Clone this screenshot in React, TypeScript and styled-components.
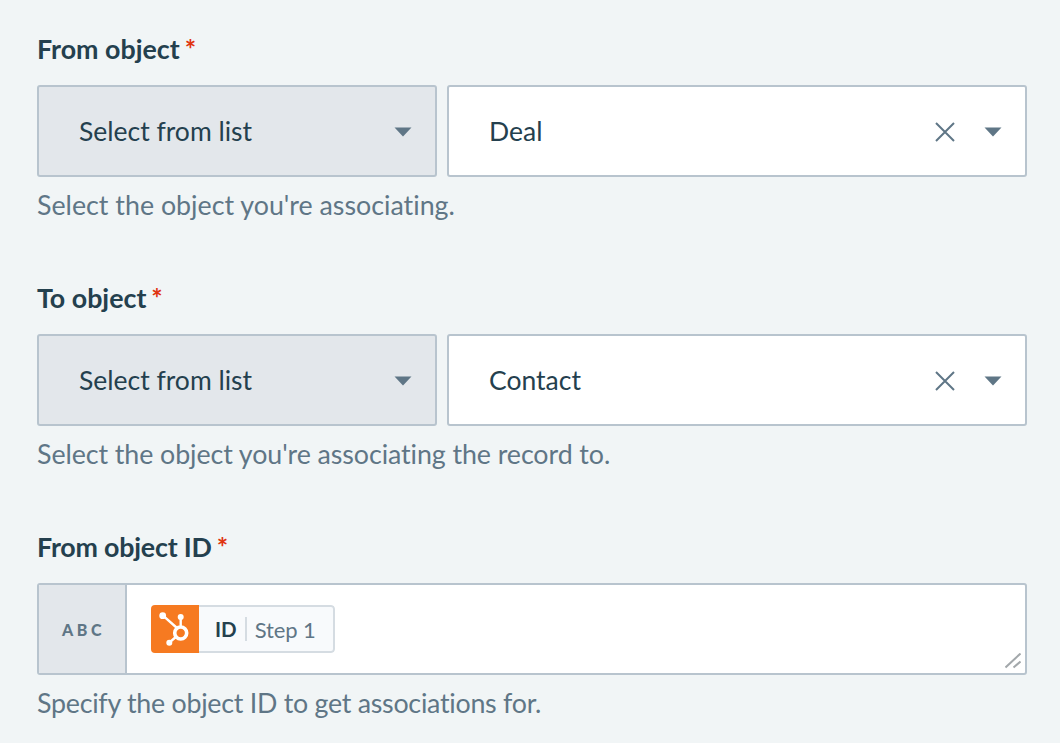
import React from 'react';
import styled, { createGlobalStyle } from 'styled-components';

const GlobalStyle = createGlobalStyle`
  html, body {
    margin: 0;
    padding: 0;
    background: #f1f5f6;
  }
  body {
    font-family: 'Lato', 'Noto Sans', sans-serif;
    font-variant-ligatures: none;
    color: #24404e;
  }
`;

const Caret = () => (
  <CaretSvg viewBox="0 0 18 10" width="18" height="10">
    <path d="M0.5 0.5h17L9 9.5z" fill="#5f7686" />
  </CaretSvg>
);

const Clear = () => (
  <ClearSvg viewBox="0 0 20 20" width="20" height="20">
    <path d="M1 1l18 18M19 1L1 19" stroke="#5f7686" strokeWidth="2" fill="none" />
  </ClearSvg>
);

const HubspotLogo = () => (
  <svg viewBox="0 0 48 48" width="48" height="48">
    <g fill="none" stroke="#fff">
      <circle cx="29.7" cy="28" r="6" strokeWidth="3.6" />
      <path d="M29.7 12v9M12 10.7l14 12.3M18.3 37.7l6.5-5.7" strokeWidth="2.4" />
    </g>
    <g fill="#fff">
      <circle cx="29.7" cy="12" r="3" />
      <circle cx="11.7" cy="10.7" r="3.4" />
      <circle cx="18.3" cy="37.7" r="3" />
    </g>
  </svg>
);

const SelectRow = ({ value }: { value: string }) => (
  <Row>
    <ModeSelect>
      <span>Select from list</span>
      <Caret />
    </ModeSelect>
    <ValueSelect>
      <span>{value}</span>
      <Actions>
        <Clear />
        <Caret />
      </Actions>
    </ValueSelect>
  </Row>
);

const App = () => (
  <Page>
    <GlobalStyle />
    <Field>
      <Label>
        From object<Star>*</Star>
      </Label>
      <SelectRow value="Deal" />
      <Hint>Select the object you're associating.</Hint>
    </Field>
    <Field>
      <Label>
        To object<Star>*</Star>
      </Label>
      <SelectRow value="Contact" />
      <Hint $tracking={-0.08}>Select the object you're associating the record to.</Hint>
    </Field>
    <Field>
      <Label $tracking={-0.2}>
        From object ID<Star>*</Star>
      </Label>
      <TextBox>
        <TypeTag>ABC</TypeTag>
        <TextArea>
          <Pill>
            <PillLogo>
              <HubspotLogo />
            </PillLogo>
            <PillBody>
              <PillName>ID</PillName>
              <PillStep>Step 1</PillStep>
            </PillBody>
          </Pill>
          <Grip viewBox="0 0 16 16" width="16" height="16">
            <path d="M0.5 14.5L15.5 0.5M8.5 14.5l7-6" stroke="#a3a8ab" strokeWidth="2" fill="none" />
          </Grip>
        </TextArea>
      </TextBox>
      <Hint $tracking={-0.26}>Specify the object ID to get associations for.</Hint>
    </Field>
  </Page>
);

export default App;

const Page = styled.div`
  box-sizing: border-box;
  width: 1060px;
  height: 743px;
  padding: 31px 33px 0 37px;
  display: flex;
  flex-direction: column;
  gap: 57px;
  overflow: hidden;
`;

const Field = styled.div`
  display: flex;
  flex-direction: column;
`;

const Label = styled.label<{ $tracking?: number }>`
  font-size: 26.8px;
  line-height: 36px;
  font-weight: 700;
  letter-spacing: ${(props) => props.$tracking ?? 0}px;
  margin-bottom: 18px;
  color: #24404e;
`;

const Star = styled.span`
  color: #e0330f;
  margin-left: 5px;
`;

const Row = styled.div`
  display: grid;
  grid-template-columns: 400px 580px;
  gap: 10px;
`;

const Control = styled.div`
  box-sizing: border-box;
  height: 92px;
  border: 2px solid #b8c4ce;
  border-radius: 3px;
  padding: 0 23px 0 40px;
  display: flex;
  align-items: center;
  justify-content: space-between;
  font-size: 26.5px;
`;

const ModeSelect = styled(Control)`
  background: #e3e7eb;
`;

const ValueSelect = styled(Control)`
  background: #fff;
`;

const Actions = styled.div`
  display: flex;
  align-items: center;
  gap: 29px;
`;

const CaretSvg = styled.svg`
  display: block;
  margin-top: 2px;
`;

const ClearSvg = styled.svg`
  display: block;
  margin-top: 2px;
`;

const Hint = styled.div<{ $tracking?: number }>`
  margin-top: 10px;
  font-size: 26.8px;
  line-height: 36px;
  letter-spacing: ${(props) => props.$tracking ?? 0}px;
  color: #5f7686;
`;

const TextBox = styled.div`
  box-sizing: border-box;
  height: 92px;
  border: 2px solid #b8c4ce;
  border-radius: 3px;
  display: flex;
  background: #fff;
  overflow: hidden;
`;

const TypeTag = styled.div`
  box-sizing: border-box;
  flex: 0 0 88px;
  padding-left: 3px;
  background: #e3e7eb;
  border-right: 2px solid #b8c4ce;
  display: flex;
  align-items: center;
  justify-content: center;
  font-size: 16px;
  font-weight: 900;
  letter-spacing: 3.6px;
  color: #5f7686;
`;

const TextArea = styled.div`
  position: relative;
  flex: 1;
  padding: 20px 24px;
`;

const Grip = styled.svg`
  position: absolute;
  right: 4px;
  bottom: 4px;
`;

const Pill = styled.div`
  display: inline-flex;
  height: 48px;
  border-radius: 4px;
  overflow: hidden;
`;

const PillLogo = styled.div`
  width: 48px;
  height: 48px;
  background: #f67a21;
`;

const PillBody = styled.div`
  box-sizing: border-box;
  display: flex;
  align-items: center;
  padding: 0 17px 0 16px;
  background: #f8fafc;
  border: 2px solid #d5dce2;
  border-left: 0;
  border-radius: 0 4px 4px 0;
  font-size: 22px;
`;

const PillName = styled.span`
  font-size: 20.5px;
  font-weight: 700;
  color: #24404e;
  padding-right: 8px;
  border-right: 2px solid #d5dce2;
  line-height: 24px;
`;

const PillStep = styled.span`
  color: #5f7686;
  padding-left: 8px;
  letter-spacing: -0.1px;
`;
